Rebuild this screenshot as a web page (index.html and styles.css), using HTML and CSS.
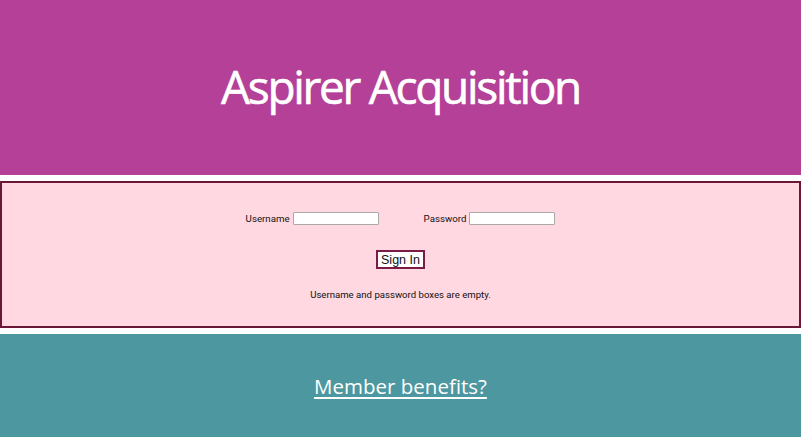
FILE: index.html
```html
<!DOCTYPE html>
<html>
<head>
<meta charset="utf-8">
<link rel="stylesheet" href="styles.css">
</head>
<body>
<div class="page">
  <header class="hero">
    <h1 class="title">Aspirer Acquisition</h1>
  </header>
  <section class="login">
    <div class="fields">
      <label class="field"><span class="lbl">Username</span><input class="box" type="text"></label>
      <label class="field"><span class="lbl">Password</span><input class="box" type="password"></label>
    </div>
    <button class="signin" type="button">Sign In</button>
    <p class="status">Username and password boxes are empty.</p>
  </section>
  <section class="benefits">
    <a class="link" href="#">Member benefits?</a>
  </section>
</div>
</body>
</html>
```
FILE: styles.css
```css
html, body { margin: 0; padding: 0; background: #ffffff; }
.page { width: 801px; display: flex; flex-direction: column; gap: 6px; }
.hero {
  height: 175px; background: #b44097;
  display: flex; align-items: center; justify-content: center;
}
.title {
  margin: 0; color: #ffffff; font-family: "Open Sans", sans-serif;
  font-weight: 400; font-size: 46px; letter-spacing: -2.3px; padding-bottom: 4px;
  -webkit-text-stroke: 0.6px #ffffff;
}
.login {
  height: 143px; background: #ffd8e2; border: 2px solid #6b1838;
  display: flex; flex-direction: column; align-items: center;
  font-family: Roboto, sans-serif; color: #111;
}
.fields { display: flex; gap: 45px; margin-top: 29px; }
.field { display: flex; align-items: center; gap: 3px; font-size: 9.7px; }
.box {
  width: 82px; height: 9px; padding: 1px; margin: 0; border: 1px solid #a9a9a9;
  background: #fff; border-radius: 1px;
}
.signin {
  margin-top: 25px; padding: 0 3px; height: 19px; font-family: "Liberation Sans", Arial, sans-serif;
  font-size: 12.5px; color: #111; background: #fff; border: 2px solid #7a1c44; border-radius: 0;
}
.status { margin: 20px 0 0; font-size: 9.6px; }
.benefits {
  height: 103px; background: #4d97a0;
  display: flex; align-items: center; justify-content: center;
}
.link { color: #ffffff; font-family: "Open Sans", sans-serif; font-size: 20.5px; text-decoration: underline; text-underline-offset: 3px; }
```
